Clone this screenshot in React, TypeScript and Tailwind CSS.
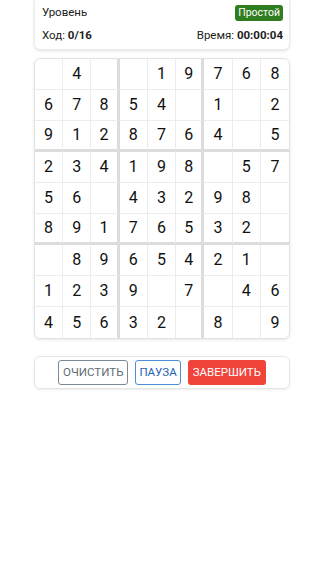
import React from "react";

const grid: (number | null)[][] = [
  [null, 4, null, null, 1, 9, 7, 6, 8],
  [6, 7, 8, 5, 4, null, 1, null, 2],
  [9, 1, 2, 8, 7, 6, 4, null, 5],
  [2, 3, 4, 1, 9, 8, null, 5, 7],
  [5, 6, null, 4, 3, 2, 9, 8, null],
  [8, 9, 1, 7, 6, 5, 3, 2, null],
  [null, 8, 9, 6, 5, 4, 2, 1, null],
  [1, 2, 3, 9, null, 7, null, 4, 6],
  [4, 5, 6, 3, 2, null, 8, null, 9],
];

export default function App() {
  return (
    <div className="w-[324px] h-[576px] bg-white flex flex-col items-center" style={{ fontFamily: "Roboto, 'Noto Sans', sans-serif" }}>
      <div className="w-[256px] h-[50px] bg-white rounded-b-md border border-t-0 border-[#ececec] shadow-[0_1px_3px_rgba(0,0,0,0.12)] px-[7px] pr-[6px] flex flex-col text-[11.5px] text-[#222]">
        <div className="flex items-center justify-between h-[26px]">
          <span>Уровень</span>
          <span className="bg-[#2f7d1f] text-white rounded-[3px] px-[3px] h-[16px] leading-[16px] text-[10.5px]">Простой</span>
        </div>
        <div className="flex items-center justify-between h-[20px]">
          <span>
            Ход: <b>0/16</b>
          </span>
          <span>
            Время: <b>00:00:04</b>
          </span>
        </div>
      </div>

      <div className="mt-[8px] w-[256px] rounded-md border border-[#e2e2e2] shadow-[0_1px_3px_rgba(0,0,0,0.1)] grid grid-cols-9 overflow-hidden">
        {grid.map((row, r) =>
          row.map((v, c) => {
            const right = c === 2 || c === 5 ? "border-r-[3px] border-r-[#dcdcdc]" : c === 8 ? "" : "border-r border-r-[#ececec]";
            const bottom = r === 2 || r === 5 ? "border-b-[3px] border-b-[#dcdcdc]" : r === 8 ? "" : "border-b border-b-[#ececec]";
            return (
              <div
                key={`${r}-${c}`}
                className={`h-[31px] flex items-center justify-center text-[16px] text-[#111] ${right} ${bottom}`}
              >
                {v ?? ""}
              </div>
            );
          })
        )}
      </div>

      <div className="mt-[17px] w-[256px] h-[33px] rounded-md border border-[#e6e6e6] shadow-[0_1px_2px_rgba(0,0,0,0.08)] flex items-center justify-center gap-[7px] text-[11.5px]">
        <button className="h-[25px] px-[4px] border border-[#7a8a96] rounded-[3px] text-[#5f6b73] uppercase">Очистить</button>
        <button className="h-[25px] px-[3px] border border-[#4d8fd6] rounded-[3px] text-[#1e62b0] uppercase">Пауза</button>
        <button className="h-[25px] px-[5px] bg-[#f0433a] rounded-[3px] text-white uppercase">Завершить</button>
      </div>
    </div>
  );
}
